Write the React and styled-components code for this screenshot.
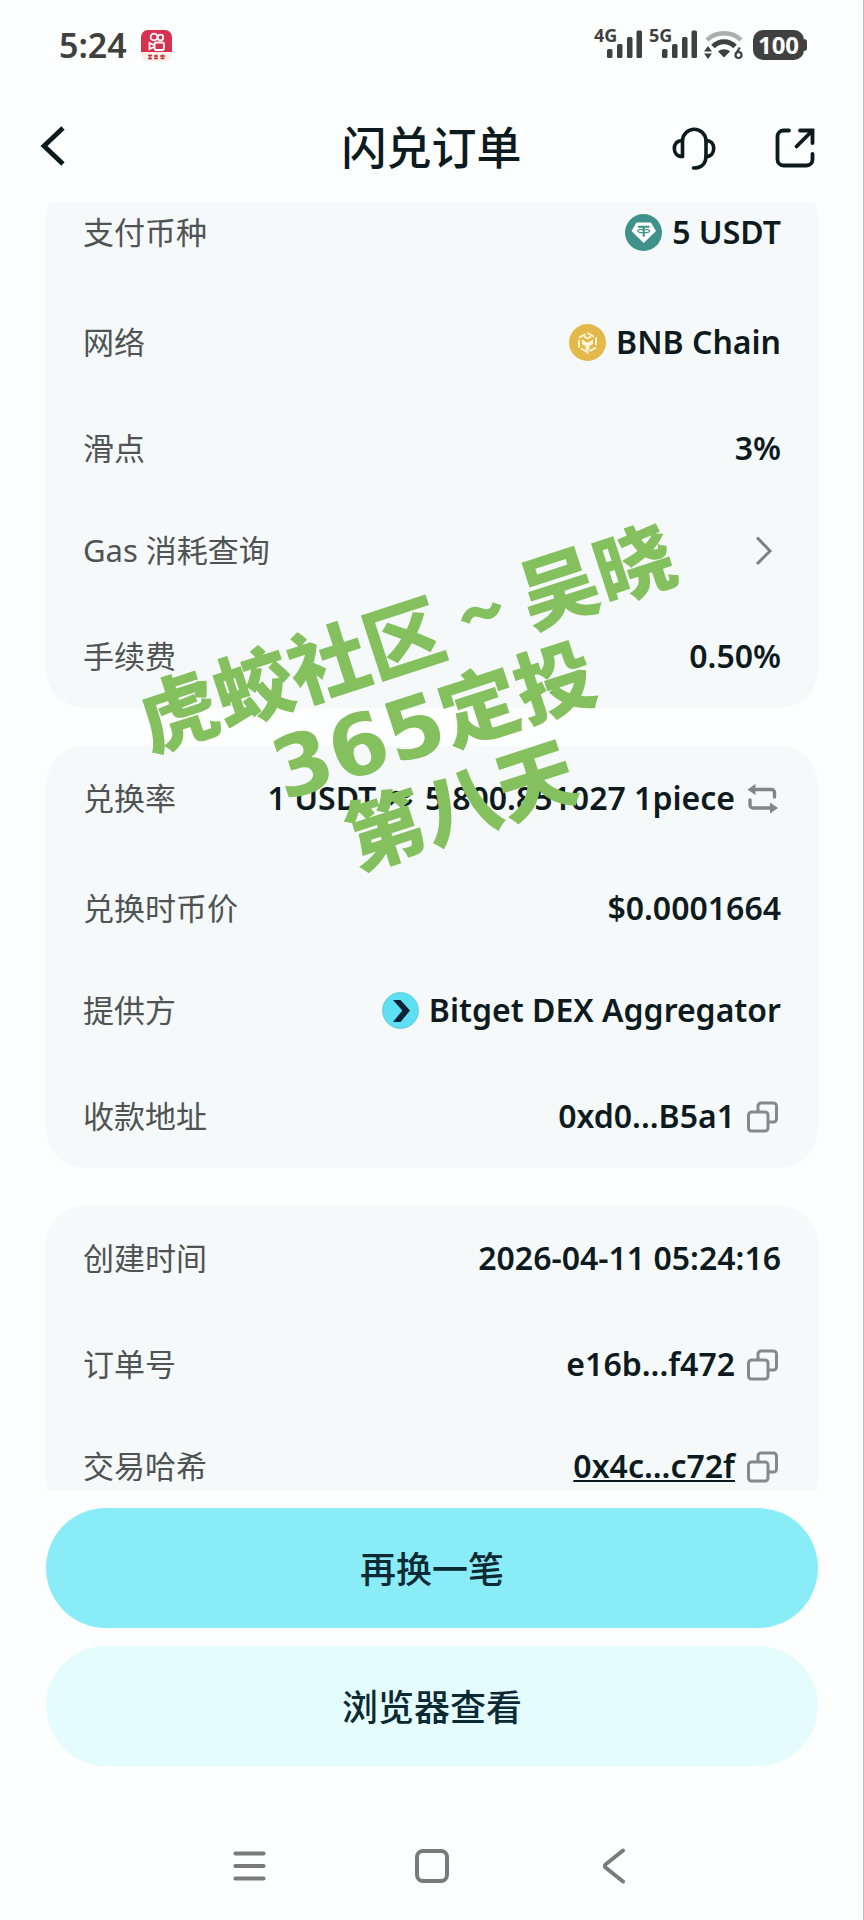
import styled, { createGlobalStyle } from "styled-components";

const GlobalStyle = createGlobalStyle`
  * {
    box-sizing: border-box;
  }
  body {
    margin: 0;
    background: #fdfefe;
    font-family: "Noto Sans", "Noto Sans CJK SC", sans-serif;
    color: #0d1b20;
  }
  button {
    border: 0;
    padding: 0;
    background: none;
    font-family: inherit;
    color: inherit;
    cursor: pointer;
  }
  svg {
    display: block;
    flex-shrink: 0;
  }
`;

const StyledScreen = styled.div`
  position: relative;
  display: flex;
  flex-direction: column;
  height: 100vh;
  overflow: hidden;
  border-right: 1px solid #b9bcbc;
`;

const StyledStatusBar = styled.div`
  flex-shrink: 0;
  display: flex;
  align-items: center;
  justify-content: space-between;
  height: 90px;
  padding: 0 56px 0 59px;
  color: #404040;
  .left{
    display: flex;
    align-items: center;
    gap: 14px;
  }
  .right{
    display: flex;
    align-items: center;
    gap: 7px;
  }
  .time{
    font-size: 34px;
    font-weight: 600;
    line-height: 40px;
  }
`;

const StyledSignal = styled.div`
  position: relative;
  width: 48px;
  height: 32px;
  span{
    position: absolute;
    top: -4px;
    left: 0;
    font-size: 18px;
    font-weight: 700;
    line-height: 20px;
  }
`;

const StyledBattery = styled.div`
  display: flex;
  align-items: center;
  margin-left: 2px;
  span{
    width: 51px;
    height: 30px;
    border-radius: 10px;
    background: #404040;
    color: #fff;
    font-size: 24px;
    font-weight: 700;
    line-height: 30px;
    text-align: center;
  }
  &::after{
    content: '';
    width: 3px;
    height: 12px;
    border-radius: 0 3px 3px 0;
    background: #404040;
  }
`;

const StyledHeader = styled.header`
  flex-shrink: 0;
  display: grid;
  grid-template-columns: 1fr auto 1fr;
  align-items: center;
  height: 112px;
  padding: 4px 40px 0;
  h1{
    margin: 0;
    font-size: 45px;
    font-weight: 500;
    line-height: 60px;
  }
  .actions{
    display: flex;
    align-items: center;
    justify-content: flex-end;
    gap: 59px;
    padding-right: 8px;
  }
`;

/* 상단이 살짝 스크롤된 상태 */
const StyledMain = styled.main`
  flex: 1;
  min-height: 0;
  overflow: hidden;
  padding: 0 45px 0 46px;
`;

const StyledList = styled.div`
  display: flex;
  flex-direction: column;
  gap: 38px;
  margin-top: -22px;
`;

const StyledCard = styled.section`
  padding: 30px 37px;
  border-radius: 38px;
  background: #f5f9fa;
`;

const StyledRow = styled.div`
  display: flex;
  align-items: center;
  justify-content: space-between;
  height: 44px;
  margin-top: ${({ $gap }) => $gap || 0}px;
  white-space: nowrap;
  .label{
    font-size: 31px;
    line-height: 44px;
    color: #4f5354;
  }
  .value{
    display: flex;
    align-items: center;
    gap: 10px;
    font-size: 32px;
    font-weight: 600;
    line-height: 44px;
  }
  a{
    color: inherit;
    text-decoration: underline;
    text-decoration-thickness: 2px;
    text-underline-offset: 2px;
    text-decoration-skip-ink: none;
  }
`;

const StyledWatermark = styled.div`
  position: absolute;
  top: 717px;
  left: 50%;
  transform: translate(-50%, -50%) rotate(-18deg);
  color: #84c05d;
  font-family: "Noto Sans CJK SC", sans-serif;
  font-size: 79px;
  font-weight: 900;
  line-height: 88px;
  text-align: center;
  white-space: nowrap;
  pointer-events: none;
  .num{
    font-family: "DejaVu Sans", sans-serif;
    font-size: 84px;
    line-height: 44px;
  }
`;

const StyledActions = styled.div`
  flex-shrink: 0;
  display: flex;
  flex-direction: column;
  gap: 18px;
  padding: 17px 45px 46px 46px;
`;

const StyledButton = styled.button`
  height: 120px;
  padding-top: 4px;
  border-radius: 60px;
  background: ${({ $primary }) => ($primary ? '#8aecf7' : '#e4fcfe')};
  color: #0b2a33;
  font-size: 36px;
  font-weight: 500;
  line-height: 48px;
`;

const StyledSystemNav = styled.nav`
  flex-shrink: 0;
  display: flex;
  align-items: center;
  justify-content: center;
  gap: 146px;
  height: 108px;
`;

const AppBadge = () => (
  <svg width="31" height="31" viewBox="0 0 31 31" fill="none" aria-hidden="true">
    <rect width="31" height="31" rx="7" fill="#fdeee6" />
    <path d="M0 22V7a7 7 0 0 1 7-7h17a7 7 0 0 1 7 7v15z" fill="#d8304f" />
    <g stroke="#fff" strokeWidth="1.8">
      <circle cx="13" cy="7" r="3.4" />
      <circle cx="19.5" cy="7.5" r="2.8" />
      <rect x="13.5" y="12.5" width="9.5" height="7.5" rx="2" />
      <path d="M13 15l-4.500-2v6l4.500-2" />
    </g>
    <path d="M7 25.500h4M7 28.500h4M9 24.500v5M13 26h4M13 28.500h4M15 24.500v4M19 26h5M21.500 24.500v4.500M19.500 28.500h4" stroke="#c8323f" strokeWidth="1.300" />
  </svg>
);

const Signal = ({ type }) => (
  <StyledSignal>
    <span>{type}</span>
    <svg width="48" height="32" viewBox="0 0 48 32" fill="currentColor" aria-hidden="true">
      <rect x="13" y="20" width="5.500" height="9" rx="1.500" />
      <rect x="23" y="15" width="5.500" height="14" rx="1.500" />
      <rect x="33" y="8" width="5.500" height="21" rx="1.500" />
      <rect x="42.500" y="1.500" width="5.500" height="27.500" rx="1.500" />
    </svg>
  </StyledSignal>
);

const Wifi = () => (
  <svg width="40" height="32" viewBox="0 0 40 32" fill="none" aria-hidden="true">
    <path d="M3 11C12 2 28 2 37 11" stroke="#adadad" strokeWidth="4.500" />
    <path d="M9 17.500C15 11 25 11 31 17.500" stroke="#404040" strokeWidth="5" />
    <path d="M14 22.500C17.500 19.500 22.500 19.500 26 22.500L20 28.500z" fill="#404040" />
    <path d="M0 22.500l4-5.500 4 5.500zM0 24.500l4 5.500 4-5.500z" fill="#404040" />
    <circle cx="34.500" cy="26" r="3" stroke="#404040" strokeWidth="2.200" />
    <path d="M31.800 25l4-6.500" stroke="#404040" strokeWidth="2.200" />
  </svg>
);

const BackIcon = () => (
  <svg width="28" height="44" viewBox="0 0 28 44" fill="none" aria-hidden="true">
    <path d="M23 4L4 22l19 18" stroke="#0b1a1f" strokeWidth="4.800" />
  </svg>
);

const HeadsetIcon = () => (
  <svg width="44" height="44" viewBox="0 0 44 44" fill="none" stroke="#0b1a1f" strokeWidth="3.600" strokeLinecap="round" strokeLinejoin="round" aria-hidden="true">
    <path d="M10.500 30.500V14A11.800 11.800 0 0 1 34 14v16c0 7-4 12-12.500 12" />
    <path d="M10.500 14.500C5 14.500 2.300 18 2.300 22.500s2.700 8 8.200 8" />
    <path d="M34 14.500c5 0 7.700 3.500 7.700 8s-2.700 8-7.700 8" />
  </svg>
);

const ShareIcon = () => (
  <svg width="40" height="40" viewBox="0 0 40 40" fill="none" stroke="#0b1a1f" strokeWidth="3.800" strokeLinecap="round" aria-hidden="true">
    <path d="M14 2.500H8.500a6 6 0 0 0-6 6v23a6 6 0 0 0 6 6h23a6 6 0 0 0 6-6V26" />
    <path d="M25 2.500h12.500V15M36.500 3.500L21.500 18.500" />
  </svg>
);

const UsdtIcon = () => (
  <svg width="37" height="37" viewBox="0 0 37 37" aria-hidden="true">
    <circle cx="18.500" cy="18.500" r="18.500" fill="#3f918b" />
    <path d="M11.500 8.500h14.500l5 8.500-12.300 12L6.500 17z" fill="#fff" />
    <path d="M13 12.800h11.500M18.700 12.800v10" stroke="#3f918b" strokeWidth="2" />
    <ellipse cx="18.700" cy="17" rx="6" ry="1.700" fill="none" stroke="#3f918b" strokeWidth="1.200" />
  </svg>
);

const BnbIcon = () => (
  <svg width="37" height="37" viewBox="0 0 37 37" fill="none" aria-hidden="true">
    <circle cx="18.500" cy="18.500" r="18.500" fill="#e5b84c" />
    <path d="M18.500 9l8.500 4.800v9.600l-8.500 4.800-8.500-4.800v-9.600z" stroke="#fff8dc" strokeWidth="1.800" strokeDasharray="7.500 2.200" />
    <path d="M13 15.500l5.500 3.200 5.500-3.200v4.500l-3.500 2v3.500l-2 1.200-2-1.200V22L13 20z" fill="#fff8dc" />
    <path d="M15 12.500l3.500 2 3.500-2M18.500 27v3" stroke="#fff8dc" strokeWidth="1.600" />
  </svg>
);

const BitgetIcon = () => (
  <svg width="37" height="37" viewBox="0 0 37 37" aria-hidden="true">
    <circle cx="18.500" cy="18.500" r="18" fill="#5fe0f2" stroke="#4fb9c9" strokeWidth=".6" />
    <path d="M11 8h7.500L28 18.500 18.500 30H11l9.300-11.500z" fill="#0a2238" />
  </svg>
);

const ChevronIcon = () => (
  <svg width="36" height="36" viewBox="0 0 36 36" fill="none" aria-hidden="true">
    <path d="M12 5.500L25 19 12 32" stroke="#7b8182" strokeWidth="3" />
  </svg>
);

const SwapIcon = () => (
  <svg width="36" height="36" viewBox="0 0 36 36" fill="none" stroke="#808586" strokeWidth="3.400" aria-hidden="true">
    <path d="M9 9.500h17.500a3 3 0 0 1 3 3V17M5 20v5a3 3 0 0 0 3 3h17.500" strokeLinecap="round" />
    <path d="M2.500 9.500L10.500 4v11zM33 28l-8-5.500v11z" fill="#808586" stroke="none" />
  </svg>
);

const CopyIcon = () => (
  <svg width="36" height="36" viewBox="0 0 36 36" fill="none" stroke="#85898a" strokeWidth="3" aria-hidden="true">
    <path d="M13 13V8A3 3 0 0 1 16 5H28.500a3 3 0 0 1 3 3v13a3 3 0 0 1-3 3H23" />
    <rect x="3.500" y="14" width="19.500" height="19" rx="3" />
  </svg>
);

const MenuIcon = () => (
  <svg width="36" height="36" viewBox="0 0 36 36" stroke="#7a7a7a" strokeWidth="4.200" strokeLinecap="round" aria-hidden="true">
    <path d="M3.500 5.500h28M3.500 18h28M3.500 30.500h28" />
  </svg>
);

const SquareIcon = () => (
  <svg width="36" height="36" viewBox="0 0 36 36" fill="none" aria-hidden="true">
    <rect x="3" y="3" width="30" height="30" rx="6" stroke="#7a7a7a" strokeWidth="4" />
  </svg>
);

const NavBackIcon = () => (
  <svg width="36" height="36" viewBox="0 0 36 36" fill="none" aria-hidden="true">
    <path d="M27 2.500L9.500 16.500a2 2 0 0 0 0 3L27 33.500" stroke="#7a7a7a" strokeWidth="4" strokeLinecap="round" />
  </svg>
);

const CopyButton = () => (
  <button type="button" aria-label="复制"><CopyIcon /></button>
);

const cards = [
  [
    { label: '支付币种', value: <><UsdtIcon /><span>5 USDT</span></> },
    { label: '网络', gap: 66, value: <><BnbIcon /><span>BNB Chain</span></> },
    { label: '滑点', gap: 62, value: <span>3%</span> },
    { label: 'Gas 消耗查询', gap: 58, value: <button type="button" aria-label="Gas 消耗查询"><ChevronIcon /></button> },
    { label: '手续费', gap: 62, value: <span>0.50%</span> },
  ],
  [
    { label: '兑换率', value: <><span>1 USDT ≈ 5,800.851027 1piece</span><button type="button" aria-label="切换"><SwapIcon /></button></> },
    { label: '兑换时币价', gap: 66, value: <span>$0.0001664</span> },
    { label: '提供方', gap: 58, value: <><BitgetIcon /><span>Bitget DEX Aggregator</span></> },
    { label: '收款地址', gap: 62, value: <><span>0xd0...B5a1</span><CopyButton /></> },
  ],
  [
    { label: '创建时间', value: <span>2026-04-11 05:24:16</span> },
    { label: '订单号', gap: 62, value: <><span>e16b...f472</span><CopyButton /></> },
    { label: '交易哈希', gap: 58, value: <><a href="#tx">0x4c...c72f</a><CopyButton /></> },
  ],
];

const App = () => {
  return (
    <>
      <GlobalStyle />
      <StyledScreen>
        <StyledStatusBar>
          <div className="left">
            <span className="time">5:24</span>
            <AppBadge />
          </div>
          <div className="right">
            <Signal type="4G" />
            <Signal type="5G" />
            <Wifi />
            <StyledBattery><span>100</span></StyledBattery>
          </div>
        </StyledStatusBar>
        <StyledHeader>
          <div>
            <button type="button" aria-label="返回"><BackIcon /></button>
          </div>
          <h1>闪兑订单</h1>
          <div className="actions">
            <button type="button" aria-label="客服"><HeadsetIcon /></button>
            <button type="button" aria-label="分享"><ShareIcon /></button>
          </div>
        </StyledHeader>
        <StyledMain>
          <StyledList>
            {cards.map((rows) => (
              <StyledCard key={rows[0].label}>
                {rows.map((row) => (
                  <StyledRow key={row.label} $gap={row.gap}>
                    <span className="label">{row.label}</span>
                    <div className="value">{row.value}</div>
                  </StyledRow>
                ))}
              </StyledCard>
            ))}
          </StyledList>
        </StyledMain>
        <StyledActions>
          <StyledButton type="button" $primary>再换一笔</StyledButton>
          <StyledButton type="button">浏览器查看</StyledButton>
        </StyledActions>
        <StyledSystemNav>
          <button type="button" aria-label="菜单"><MenuIcon /></button>
          <button type="button" aria-label="主页"><SquareIcon /></button>
          <button type="button" aria-label="后退"><NavBackIcon /></button>
        </StyledSystemNav>
        <StyledWatermark>
          虎蛟社区 ~ 吴晓<br />
          <span className="num">365</span>定投<br />
          第八天
        </StyledWatermark>
      </StyledScreen>
    </>
  );
};

export default App;
